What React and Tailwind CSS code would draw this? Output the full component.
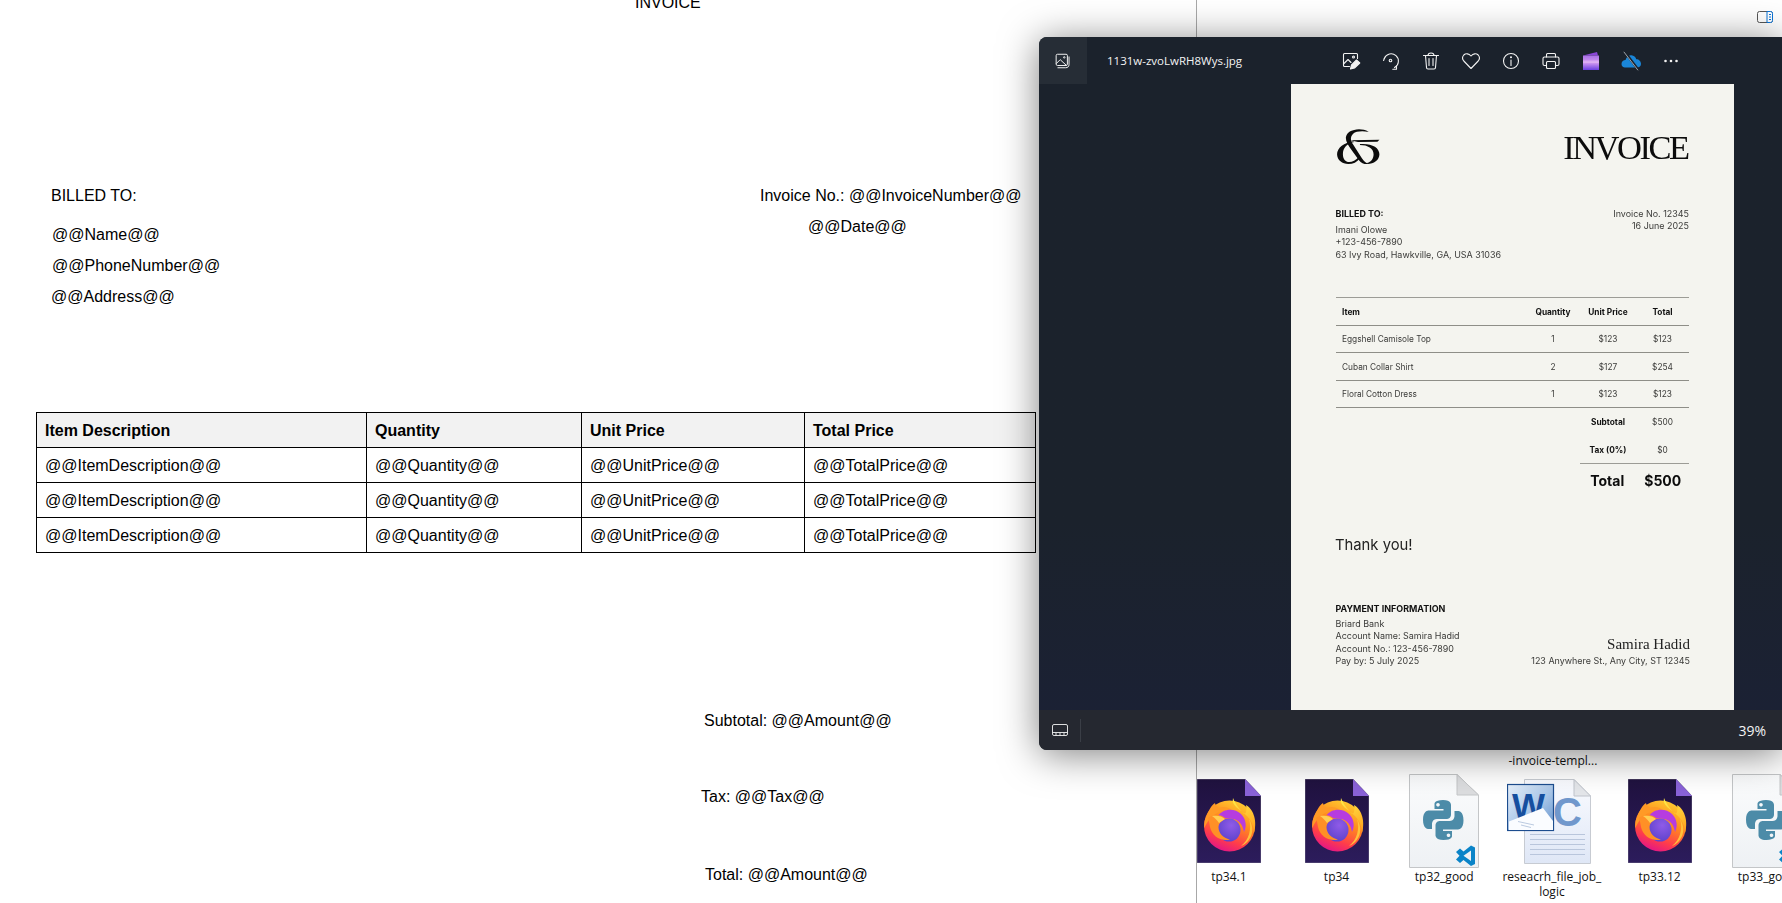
import React from "react";

const Tool = ({ children }) => (
  <svg viewBox="0 0 20 20" className="w-5 h-5" fill="none" stroke="#f2f2f2" strokeWidth="1.1" strokeLinecap="round" strokeLinejoin="round">
    {children}
  </svg>
);

const Gradients = () => (
  <svg width="0" height="0" className="absolute">
    <defs>
      <linearGradient id="ffOuter" x1="0.75" y1="0.05" x2="0.35" y2="1">
        <stop offset="0" stopColor="#ffc92e" />
        <stop offset="0.4" stopColor="#ff8a1f" />
        <stop offset="0.75" stopColor="#ff3d4a" />
        <stop offset="1" stopColor="#e31587" />
      </linearGradient>
      <linearGradient id="ffFlame" x1="0.3" y1="0" x2="0.7" y2="1">
        <stop offset="0" stopColor="#ffe847" />
        <stop offset="1" stopColor="#ffa51f" />
      </linearGradient>
      <linearGradient id="ffDoc" x1="0.5" y1="0" x2="0.5" y2="1">
        <stop offset="0" stopColor="#20123f" />
        <stop offset="1" stopColor="#2c1c5c" />
      </linearGradient>
      <radialGradient id="ffBall" cx="0.6" cy="0.3" r="0.8">
        <stop offset="0" stopColor="#8f5be8" />
        <stop offset="1" stopColor="#5840c8" />
      </radialGradient>
      <linearGradient id="docPale" x1="0" y1="0" x2="0" y2="1">
        <stop offset="0" stopColor="#fbfcfd" />
        <stop offset="1" stopColor="#eef1f4" />
      </linearGradient>
      <linearGradient id="wordDoc" x1="0" y1="0" x2="0" y2="1">
        <stop offset="0" stopColor="#fafbff" />
        <stop offset="1" stopColor="#dfe7f6" />
      </linearGradient>
      <linearGradient id="wordBadge" x1="0" y1="0" x2="1" y2="1">
        <stop offset="0" stopColor="#e8f1fb" />
        <stop offset="0.55" stopColor="#a9c6e8" />
        <stop offset="1" stopColor="#5f8fcb" />
      </linearGradient>
      <linearGradient id="clip" x1="0" y1="0" x2="0" y2="1">
        <stop offset="0" stopColor="#a970e8" />
        <stop offset="0.5" stopColor="#d29af0" />
        <stop offset="1" stopColor="#6b3fe0" />
      </linearGradient>
    </defs>
  </svg>
);

const FirefoxFile = () => (
  <svg viewBox="0 0 64 84" className="w-16 h-[84px] shrink-0">
    <path d="M0 0H48L64 17V84H0Z" fill="url(#ffDoc)" stroke="#8d8a9c" strokeWidth="0.6" />
    <path d="M48 0L64 17H48Z" fill="#8a62d8" />
    <circle cx="32.5" cy="47" r="25.5" fill="url(#ffOuter)" />
    <path d="M36 19C34 27 43 30 50 37C56 43 57 50 57 54C61 40 55 29 49 26C50 32 49 35 47 35C44 31 39 27 36 19Z" fill="url(#ffFlame)" />
    <path d="M52 40C55 50 52 61 44 67C54 63 59 51 52 40Z" fill="#ffc23a" />
    <path d="M14 28C12 31 10 35 9 38C7 42 7 47 7.5 49C10 42 15 37 20 34C24 32 30 31 35 31C31 28 26 27 22 29C19 27 18 25 18 24C16 25 15 27 14 28Z" fill="#ff9a26" />
    <path d="M21 37C26 29 38 29 44 35C49 40 50 47 47 53C46 46 42 41 36 40C31 39 26 40 21 37Z" fill="#b63ce0" />
    <circle cx="32" cy="51" r="11.5" fill="url(#ffBall)" />
    <path d="M11 39C16 35 24 35 28 39C25 41 21.5 44 21.5 48C21.5 54 26 59 33 60.5C24 63 15 57 13 48C12.5 45 12 42 11 39Z" fill="#ff9026" />
    <path d="M15 37C20 36 25 37 28 40L22 44C20 41 18 39 15 37Z" fill="#ffce52" />
  </svg>
);

const PythonFile = () => (
  <svg viewBox="0 0 70 94" className="w-[70px] h-[94px] shrink-0">
    <path d="M0.5 0.5H48L69.5 21V93.5H0.5Z" fill="url(#docPale)" stroke="#c4c6c8" />
    <path d="M48 0.5V21H69.5Z" fill="#dcdddf" stroke="#c4c6c8" />
    <path d="M34 26C25 26 25.5 30 25.5 30V35H34.5V36.5H20C20 36.5 14 36 14 45.5C14 55 19 55 19 55H23V50C23 50 23 45 28 45H37.5C37.5 45 42 45 42 40.5V31C42 31 42.5 26 34 26ZM29 29C30 29 30.8 29.8 30.8 30.8C30.8 31.8 30 32.6 29 32.6C28 32.6 27.2 31.8 27.2 30.8C27.2 29.8 28 29 29 29Z" fill="#4c8ba8" fillRule="evenodd" />
    <path d="M34.5 66C43.5 66 43 62 43 62V57H34V55.5H48.5C48.5 55.5 54.5 56 54.5 46.5C54.5 37 49.5 37 49.5 37H45.5V42C45.5 42 45.5 47 40.5 47H31C31 47 26.5 47 26.5 51.5V61C26.5 61 26 66 34.5 66ZM39.5 63C38.5 63 37.7 62.2 37.7 61.2C37.7 60.2 38.5 59.4 39.5 59.4C40.5 59.4 41.3 60.2 41.3 61.2C41.3 62.2 40.5 63 39.5 63Z" fill="#4c8ba8" fillRule="evenodd" />
    <path d="M47 78L51 74.5L54.5 77.5L62 71.5L66 73.5V90L62 92L54.5 86L51 89L47 85.5L50.5 81.8ZM54.5 81.8L62 87V76.5Z" fill="#0a84c8" fillRule="evenodd" />
  </svg>
);

const WordFile = () => (
  <svg viewBox="0 0 84 94" className="w-[84px] h-[94px] shrink-0 -ml-[5px]">
    <path d="M17.5 5.5H67L83.5 22V89.5H17.5Z" fill="url(#wordDoc)" stroke="#c7cbd2" />
    <path d="M67 5.5V22H83.5Z" fill="#e4e6ea" stroke="#c0c4cc" />
    <text x="46" y="52" fontFamily="Liberation Sans" fontWeight="700" fontSize="40" fill="#7097cc">C</text>
    <g stroke="#b9c6dc" strokeWidth="1">
      <path d="M23 60.5H78M23 65.5H78M23 70.5H78M23 75.5H78M23 80.5H78" />
    </g>
    <rect x="0.5" y="10.5" width="46" height="46" fill="url(#wordBadge)" stroke="#1d4d8f" strokeWidth="1.2" />
    <text x="5" y="44" fontFamily="Liberation Sans" fontWeight="700" fontSize="35" fill="#164f9f">W</text>
    <path d="M2 47.5L36 34L46 47V56H2Z" fill="#fafcff" />
    <path d="M11 47.5L27 51M14 51L24 53.5" stroke="#a9bdd8" strokeWidth="0.8" />
  </svg>
);

const DocLogo = () => (
  <svg viewBox="0 0 44 38" className="w-[44px] h-[37px]" fill="#0c0c0c">
    <path d="M33 4C28 1 22 1 18 2C13 3 10 6 9.5 10C9.5 14 12 18 15 22L23 33C25 36 28 37 31 37L34 37C30 36 28 34 26 31L17 17C14 13 14 9 17 6C20 3 27 3 33 4Z" />
    <path d="M17 13.5C8 15 0.5 20 0.5 27C0.5 33 6 37 12 37C17 37 21 35 24 31L23 29.5C20 33 16 35 13 35C9 35 6.5 32 6.5 27C6.5 21 10 16 18 14.5Z" />
    <path d="M14 12.5L44 12L42 14L22 14.5Z" />
    <path d="M24 16.5C36 15.5 44 20 44 27C44 33 38 37 32 37L31 36C35 35.5 38 32 38 27C38 21 32 17.5 24 17.5Z" />
  </svg>
);

const rows = [
  ["Eggshell Camisole Top", "1", "$123", "$123"],
  ["Cuban Collar Shirt", "2", "$127", "$254"],
  ["Floral Cotton Dress", "1", "$123", "$123"],
];

const cols = "grid grid-cols-[189.5px_55px_55px_54px] items-center h-[27.5px] pt-[1px]";

const InvoiceImage = () => (
  <div className="w-[443px] h-[626px] shrink-0 bg-[#f4f4ef] px-[45px] pt-[44px] text-[#3a3a38] text-[8.95px] leading-[12.2px] font-['Inter',sans-serif]">
    <div className="blur-[0.25px]">
      <div className="flex justify-between h-[37px]">
        <DocLogo />
        <div className="text-[34.5px] leading-[37px] pt-[1px] pr-[1.5px] tracking-[-2.5px] text-[#0c0c0c] font-['Liberation_Serif',serif]">INVOICE</div>
      </div>
      <div className="flex justify-between mt-[43px] h-[52px]">
        <div className="-ml-[0.5px]">
          <p className="font-bold text-[#111] mb-[4px]">BILLED TO:</p>
          <p>Imani Olowe</p>
          <p>+123-456-7890</p>
          <p>63 Ivy Road, Hawkville, GA, USA 31036</p>
        </div>
        <div className="text-right">
          <p>Invoice No. 12345</p>
          <p>16 June 2025</p>
        </div>
      </div>
      <div className="mt-[37px] border-t border-[#9c9c96] text-[8.3px]">
        <div className={cols + " border-b border-[#8e8e88] font-bold text-[#111]"}>
          <span className="pl-[6px]">Item</span>
          <span className="text-center">Quantity</span>
          <span className="text-center">Unit Price</span>
          <span className="text-center">Total</span>
        </div>
        {rows.map((r) => (
          <div key={r[0]} className={cols + " border-b border-[#8e8e88]"}>
            <span className="pl-[6px]">{r[0]}</span>
            <span className="text-center">{r[1]}</span>
            <span className="text-center">{r[2]}</span>
            <span className="text-center">{r[3]}</span>
          </div>
        ))}
        <div className={cols}>
          <span />
          <span />
          <span className="text-center font-bold text-[#111]">Subtotal</span>
          <span className="text-center">$500</span>
        </div>
        <div className={cols}>
          <span />
          <span />
          <span className="text-center font-bold text-[#111]">Tax (0%)</span>
          <span className="text-center">$0</span>
        </div>
        <div className="ml-[244px] border-t border-[#9c9c96] h-[36px] flex items-center text-[14px] font-bold text-[#0c0c0c]">
          <span className="w-[55px] text-center">Total</span>
          <span className="w-[55px] pl-[2px] text-center">$500</span>
        </div>
      </div>
      <p className="mt-[36px] -ml-px text-[14.8px] leading-[20px] text-[#222]">Thank you!</p>
      <div className="flex justify-between items-end mt-[47px] pt-[1px]">
        <div className="-ml-[0.5px]">
          <p className="font-bold text-[#111] mb-[3px]">PAYMENT INFORMATION</p>
          <p>Briard Bank</p>
          <p>Account Name: Samira Hadid</p>
          <p>Account No.: 123-456-7890</p>
          <p>Pay by: 5 July 2025</p>
        </div>
        <div className="text-right -mr-px">
          <p className="text-[15px] leading-[16px] mb-[3px] text-[#222] font-['Liberation_Serif',serif]">Samira Hadid</p>
          <p>123 Anywhere St., Any City, ST 12345</p>
        </div>
      </div>
    </div>
  </div>
);

const ViewerWindow = () => (
  <div className="absolute left-[1039px] top-[37px] w-[743px] h-[713px] flex flex-col rounded-l-lg overflow-hidden bg-[#1b222c] shadow-[0_4px_38px_rgba(0,0,0,0.5)] text-[#f4f4f4] font-['Open_Sans',sans-serif]">
    <div className="flex items-center h-[47px] shrink-0">
      <div className="w-[48px] h-full bg-[#262d36] flex items-center justify-center">
        <svg viewBox="0 0 20 20" className="w-[18px] h-[18px] -ml-[2px]" fill="none" stroke="#f2f2f2" strokeWidth="1.1" strokeLinejoin="round">
          <rect x="3.5" y="2.5" width="12.5" height="12.5" rx="1.5" />
          <path d="M3.5 13L8 8.5L15 15" />
          <circle cx="12.5" cy="6" r="0.8" />
          <path d="M5 17.5H14C16.5 17.5 17.8 16 17.8 14V5" />
        </svg>
      </div>
      <div className="ml-[20px] w-[234px] text-[11.5px] whitespace-nowrap">1131w-zvoLwRH8Wys.jpg</div>
      <div className="flex items-center gap-5">
        <Tool>
          <path d="M8.5 15.5H3.5A1 1 0 0 1 2.5 14.5V3.5A1 1 0 0 1 3.5 2.5H15.5A1 1 0 0 1 16.5 3.5V7.5" />
          <path d="M2.5 13L7 8.5L10 11.5" />
          <circle cx="12.5" cy="6" r="1" />
          <path d="M9.5 18L10.5 14L15.5 9L18.8 12L13.5 17Z" fill="#f2f2f2" />
        </Tool>
        <Tool>
          <path d="M3.3 7.5A7.3 7.3 0 1 1 13.5 16.6" />
          <path d="M3.3 7.5L2.6 9.5" />
          <path d="M15.5 14.8V18.2H11.8" />
          <circle cx="9.5" cy="9.5" r="1.3" />
        </Tool>
        <Tool>
          <path d="M2.5 4.5H17.5" />
          <path d="M7 4.5C7 2.8 8.2 2 10 2S13 2.8 13 4.5" />
          <path d="M4.5 4.5L5.5 16.5A1.5 1.5 0 0 0 7 18H13A1.5 1.5 0 0 0 14.5 16.5L15.5 4.5" />
          <path d="M8 7.5V14.5M12 7.5V14.5" />
        </Tool>
        <Tool>
          <path d="M10 17.5L2.8 10A4.6 4.6 0 0 1 2.8 4C4.8 2.2 7.8 2.4 10 5C12.2 2.4 15.2 2.2 17.2 4A4.6 4.6 0 0 1 17.2 10Z" />
        </Tool>
        <Tool>
          <circle cx="10" cy="10" r="7.5" />
          <path d="M10 9V14.5" />
          <circle cx="10" cy="6.3" r="0.5" />
        </Tool>
        <Tool>
          <path d="M5.5 6V3.5A1 1 0 0 1 6.5 2.5H13.5A1 1 0 0 1 14.5 3.5V6" />
          <path d="M5 14.5H3.5A1.5 1.5 0 0 1 2 13V7.5A1.5 1.5 0 0 1 3.5 6H16.5A1.5 1.5 0 0 1 18 7.5V13A1.5 1.5 0 0 1 16.5 14.5H15" />
          <rect x="5.5" y="10.5" width="9" height="7" rx="1" />
        </Tool>
        <svg viewBox="0 0 20 20" className="w-5 h-5">
          <path d="M2 4.5L16 1L17 4.5Z" fill="#8a46d8" />
          <rect x="2" y="4.5" width="16" height="14.5" fill="url(#clip)" />
          <rect x="2" y="9.5" width="16" height="2.5" fill="#e8c0f4" opacity="0.55" />
        </svg>
        <svg viewBox="0 0 20 20" className="w-5 h-5">
          <path d="M0.5 13C0.5 10.5 2.5 9 4.5 9C5.5 6 8 4 10.5 4.3C12.8 4.5 14.8 6 15.3 8.2C18 8.2 20 10.3 20 13C20 15.2 18.3 16.6 16.2 16.6H4C2 16.6 0.5 15.2 0.5 13Z" fill="#1a86d8" />
          <path d="M3.5 0.5L17.5 19" stroke="#1b222c" strokeWidth="2.4" />
          <path d="M2.8 0.8L17 19.3" stroke="#a0a4aa" strokeWidth="1" />
        </svg>
        <svg viewBox="0 0 20 20" className="w-5 h-5" fill="#f2f2f2">
          <circle cx="4.5" cy="10" r="1.3" />
          <circle cx="10" cy="10" r="1.3" />
          <circle cx="15.5" cy="10" r="1.3" />
        </svg>
      </div>
    </div>
    <div className="flex-1 min-h-0 pl-[252px] bg-gradient-to-b from-[#1b222c] from-70% to-[#1b2134]">
      <InvoiceImage />
    </div>
    <div className="h-[40px] shrink-0 bg-[#252830] flex items-center">
      <div className="w-[41px] h-full flex items-center justify-center">
        <svg viewBox="0 0 16 12" className="w-4 h-3" fill="none" stroke="#f2f2f2" strokeWidth="0.9">
          <rect x="0.5" y="0.5" width="15" height="11" rx="1.5" />
          <path d="M0.5 8.5H15.5M4 8.5V11.5M8 8.5V11.5M12 8.5V11.5" />
        </svg>
      </div>
      <div className="w-px h-[23px] bg-[#3a3e46]" />
      <div className="ml-auto pr-[16px] text-[14px]">39%</div>
    </div>
  </div>
);

const files = [
  { name: "tp34.1", Icon: FirefoxFile },
  { name: "tp34", Icon: FirefoxFile },
  { name: "tp32_good", Icon: PythonFile },
  { name: "reseacrh_file_job_ logic", Icon: WordFile },
  { name: "tp33.12", Icon: FirefoxFile },
  { name: "tp33_good", Icon: PythonFile },
];

const DocRow = ({ cells, head }) => (
  <tr className={head ? "bg-[#f2f2f2] font-bold h-[35px]" : "h-[35px]"}>
    {cells.map((c) => (
      <td key={c} className="border border-black px-2 pt-[2px] pb-0 whitespace-nowrap">{c}</td>
    ))}
  </tr>
);

export default function App() {
  const body = ["@@ItemDescription@@", "@@Quantity@@", "@@UnitPrice@@", "@@TotalPrice@@"];
  return (
    <div className="relative flex w-[1782px] h-[903px] overflow-hidden bg-white text-black">
      <Gradients />
      <main className="w-[1197px] h-full shrink-0 border-r border-[#a8a8a8] bg-white text-[16px] leading-[18px] font-['Liberation_Sans',sans-serif]">
        <p className="-mt-[6px] ml-[635px]">INVOICE</p>
        <div className="flex mt-[175px]">
          <div className="w-[760px] pl-[51px]">
            <p>BILLED TO:</p>
            <p className="mt-[21px] ml-px">@@Name@@</p>
            <p className="mt-[13px] ml-px">@@PhoneNumber@@</p>
            <p className="mt-[13px]">@@Address@@</p>
          </div>
          <div>
            <p>Invoice No.: @@InvoiceNumber@@</p>
            <p className="mt-[13px] ml-[48px]">@@Date@@</p>
          </div>
        </div>
        <table className="mt-[106px] ml-[36px] w-[999px] border-collapse table-fixed">
          <colgroup>
            <col className="w-[330px]" />
            <col className="w-[215px]" />
            <col className="w-[223px]" />
            <col className="w-[231px]" />
          </colgroup>
          <tbody>
            <DocRow head cells={["Item Description", "Quantity", "Unit Price", "Total Price"]} />
            <DocRow cells={body} />
            <DocRow cells={body} />
            <DocRow cells={body} />
          </tbody>
        </table>
        <p className="mt-[159px] ml-[704px]">Subtotal: @@Amount@@</p>
        <p className="mt-[58px] ml-[701px]">Tax: @@Tax@@</p>
        <p className="mt-[60px] ml-[705px]">Total: @@Amount@@</p>
      </main>
      <section className="flex-1 min-w-0 overflow-hidden text-[12px] leading-[15px] text-[#111] font-['Open_Sans',sans-serif]">
        <div className="flex justify-end pt-[11px] pr-[9px] h-[752px]">
          <svg viewBox="0 0 16 12" className="w-4 h-3" fill="none" strokeWidth="1">
            <rect x="0.5" y="0.5" width="15" height="11" rx="2" stroke="#555" />
            <path d="M10 0.5H13.5A2 2 0 0 1 15.5 2.5V9.5A2 2 0 0 1 13.5 11.5H10Z" stroke="#0a74d8" fill="#fff" />
            <path d="M12 3.5H14M12 6H14M12 8.5H14" stroke="#0a74d8" />
          </svg>
        </div>
        <div className="grid grid-cols-[repeat(6,107.7px)] -ml-[22px] w-[700px]">
          <p className="col-start-4 text-center h-[22px] pt-[1px] pl-[2px]">-invoice-templ...</p>
          <div className="col-start-1" />
          {files.map(({ name, Icon }, i) => (
            <div key={i} className={(i === 0 ? "col-start-1 " : "") + "flex flex-col items-center"}>
              <div className="h-[94px] flex items-center justify-center">
                <Icon />
              </div>
              <p className="mt-[1px] w-[107px] text-center">{name}</p>
            </div>
          ))}
        </div>
      </section>
      <ViewerWindow />
    </div>
  );
}
